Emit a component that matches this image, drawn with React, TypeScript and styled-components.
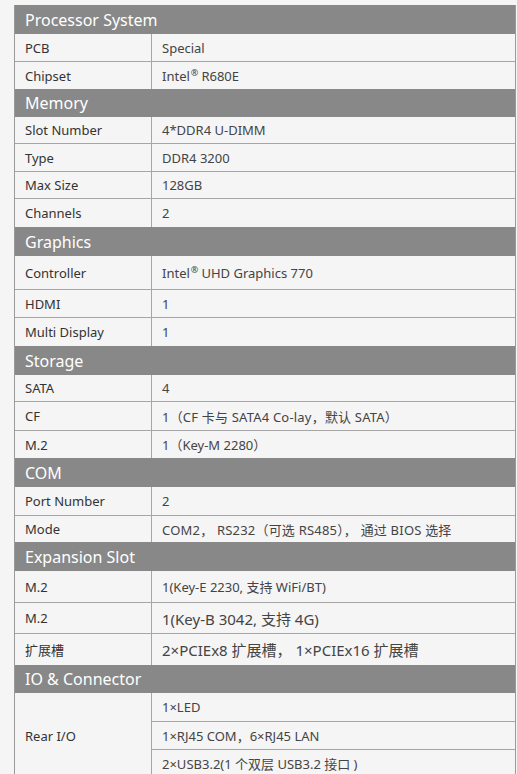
import styled, { createGlobalStyle } from "styled-components";

const GlobalStyle = createGlobalStyle`
    html, body {
        margin: 0;
        padding: 0;
        background: #f5f5f5;
    }
    body {
        font-family: "Noto Sans", "Noto Sans CJK SC", sans-serif;
        color: #333;
    }
`

const Page = styled.div`
    padding: 5px 1px 0 14px;
`

const SpecTable = styled.div`
    border-left: 1px solid #9a9a9a;
    border-right: 1px solid #9a9a9a;
    background: #f5f5f5;
`

const SectionHeader = styled.div<{ $h: number }>`
    height: ${p => p.$h}px;
    box-sizing: border-box;
    background: #888888;
    color: #fff;
    font-size: 16px;
    display: flex;
    align-items: center;
    padding-left: 10px;
`

const Row = styled.div<{ $h?: number }>`
    display: grid;
    grid-template-columns: 137px 1fr;
    box-sizing: border-box;
    min-height: ${p => p.$h ?? 28}px;

    & + & {
        border-top: 1px solid #a6a6a6;
    }
`

const Label = styled.div`
    display: flex;
    align-items: center;
    padding-left: 10px;
    font-size: 13px;
    color: #333;
    border-right: 1px solid #a6a6a6;
`

const Value = styled.div<{ $size?: number; $spacing?: number }>`
    display: flex;
    align-items: center;
    padding-left: 10px;
    font-size: ${p => p.$size ?? 13}px;
    letter-spacing: ${p => p.$spacing ?? 0}px;
    color: #444;
    white-space: pre;
`

const SubList = styled.div`
    display: flex;
    flex-direction: column;
`

const SubValue = styled(Value)`
    height: 28px;
    box-sizing: border-box;

    & + & {
        border-top: 1px solid #a6a6a6;
    }
`

const Reg = styled.span`
    font-size: 0.7em;
    position: relative;
    top: -0.35em;
    margin: 0 3px 0 1px;
`

type Spec = {
    label: string,
    value: React.ReactNode,
    h: number,
    size?: number,
    spacing?: number
}

type Section = {
    title: string,
    h: number,
    rows: Spec[]
}

const sections: Section[] = [
    {
        title: "Processor System",
        h: 29,
        rows: [
            { label: "PCB", value: "Special", h: 27 },
            { label: "Chipset", value: <>Intel<Reg>®</Reg>R680E</>, h: 28 }
        ]
    },
    {
        title: "Memory",
        h: 28,
        rows: [
            { label: "Slot Number", value: "4*DDR4 U-DIMM", h: 26 },
            { label: "Type", value: "DDR4 3200", h: 28 },
            { label: "Max Size", value: "128GB", h: 27 },
            { label: "Channels", value: "2", h: 29 }
        ]
    },
    {
        title: "Graphics",
        h: 29,
        rows: [
            { label: "Controller", value: <>Intel<Reg>®</Reg>UHD Graphics 770</>, h: 33 },
            { label: "HDMI", value: "1", h: 28 },
            { label: "Multi Display", value: "1", h: 29 }
        ]
    },
    {
        title: "Storage",
        h: 29,
        rows: [
            { label: "SATA", value: "4", h: 26 },
            { label: "CF", value: "1（CF 卡与 SATA4 Co-lay，默认 SATA）", h: 29, spacing: 0.2 },
            { label: "M.2", value: "1（Key-M 2280）", h: 28 }
        ]
    },
    {
        title: "COM",
        h: 29,
        rows: [
            { label: "Port Number", value: "2", h: 28 },
            { label: "Mode", value: "COM2， RS232（可选 RS485）， 通过 BIOS 选择", h: 27, spacing: 0.2 }
        ]
    },
    {
        title: "Expansion Slot",
        h: 29,
        rows: [
            { label: "M.2", value: "1(Key-E 2230, 支持 WiFi/BT)", h: 31 },
            { label: "M.2", value: "1(Key-B 3042, 支持 4G)", h: 31, size: 15 },
            { label: "扩展槽", value: "2×PCIEx8 扩展槽， 1×PCIEx16 扩展槽", h: 32, size: 15 }
        ]
    }
]

const rearIO = [
    "1×LED",
    "1×RJ45 COM，6×RJ45 LAN",
    "2×USB3.2(1 个双层 USB3.2 接口 )"
]

function App() {
    return <Page>
        <GlobalStyle />
        <SpecTable>
            {sections.map(section => {
                return <div key={section.title}>
                    <SectionHeader $h={section.h}>{section.title}</SectionHeader>
                    {section.rows.map((row, i) => {
                        return <Row key={i} $h={row.h}>
                            <Label>{row.label}</Label>
                            <Value $size={row.size} $spacing={row.spacing}>{row.value}</Value>
                        </Row>
                    })}
                </div>
            })}
            <SectionHeader $h={28}>IO &amp; Connector</SectionHeader>
            <Row $h={86}>
                <Label>Rear I/O</Label>
                <SubList>
                    {rearIO.map(text => <SubValue key={text}>{text}</SubValue>)}
                </SubList>
            </Row>
        </SpecTable>
    </Page>;
}

export default App;
